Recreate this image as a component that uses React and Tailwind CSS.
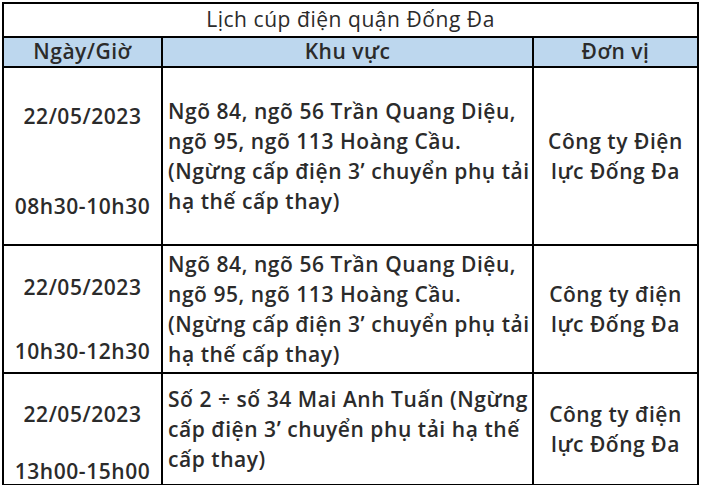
import React from "react";

const rows = [
  {
    date: "22/05/2023",
    time: "08h30-10h30",
    h: "h-[178px]",
    datePad: "pt-[33px]",
    timeGap: "mt-[60px]",
    area: [
      "Ngõ 84, ngõ 56 Trần Quang Diệu,",
      "ngõ 95, ngõ 113 Hoàng Cầu.",
      "(Ngừng cấp điện 3’ chuyển phụ tải",
      "hạ thế cấp thay)",
    ],
    unit: ["Công ty Điện", "lực Đống Đa"],
  },
  {
    date: "22/05/2023",
    time: "10h30-12h30",
    h: "h-[128px]",
    datePad: "pt-[26px]",
    timeGap: "mt-[34px]",
    area: [
      "Ngõ 84, ngõ 56 Trần Quang Diệu,",
      "ngõ 95, ngõ 113 Hoàng Cầu.",
      "(Ngừng cấp điện 3’ chuyển phụ tải",
      "hạ thế cấp thay)",
    ],
    unit: ["Công ty điện", "lực Đống Đa"],
  },
  {
    date: "22/05/2023",
    time: "13h00-15h00",
    h: "h-[110px]",
    datePad: "pt-[25px]",
    timeGap: "mt-[27px]",
    area: [
      "Số 2 ÷ số 34 Mai Anh Tuấn (Ngừng",
      "cấp điện 3’ chuyển phụ tải hạ thế",
      "cấp thay)",
    ],
    unit: ["Công ty điện", "lực Đống Đa"],
  },
];

export default function App() {
  return (
    <div className="w-[706px] h-[485px] bg-white pt-[2px] pl-[2px] font-['Open_Sans',sans-serif] text-[#2b2b2b]">
      <div className="w-[697px] border-2 border-black">
        <div className="h-[34px] flex items-center justify-center text-[21px] tracking-[0.55px] border-b-2 border-black">
          Lịch cúp điện quận Đống Đa
        </div>
        <div className="h-[30px] flex bg-[#bdd7ee] font-semibold text-[21px] tracking-[0.5px] border-b-2 border-black">
          <div className="w-[159px] flex items-center justify-center border-r-2 border-black">Ngày/Giờ</div>
          <div className="w-[371px] flex items-center justify-center border-r-2 border-black">Khu vực</div>
          <div className="flex-1 flex items-center justify-center">Đơn vị</div>
        </div>
        {rows.map((r, i) => (
          <div
            key={i}
            className={`${r.h} flex font-semibold text-[21px] leading-[30px] tracking-[0.55px] ${i < rows.length - 1 ? "border-b-2 border-black" : ""}`}
          >
            <div className={`w-[159px] flex flex-col items-center ${r.datePad} border-r-2 border-black`}>
              <div>{r.date}</div>
              <div className={r.timeGap}>{r.time}</div>
            </div>
            <div className="w-[371px] flex flex-col justify-center pl-[5px] border-r-2 border-black whitespace-nowrap">
              {r.area.map((line, j) => (
                <div key={j}>{line}</div>
              ))}
            </div>
            <div className="flex-1 flex flex-col items-center justify-center">
              {r.unit.map((line, j) => (
                <div key={j}>{line}</div>
              ))}
            </div>
          </div>
        ))}
      </div>
    </div>
  );
}
